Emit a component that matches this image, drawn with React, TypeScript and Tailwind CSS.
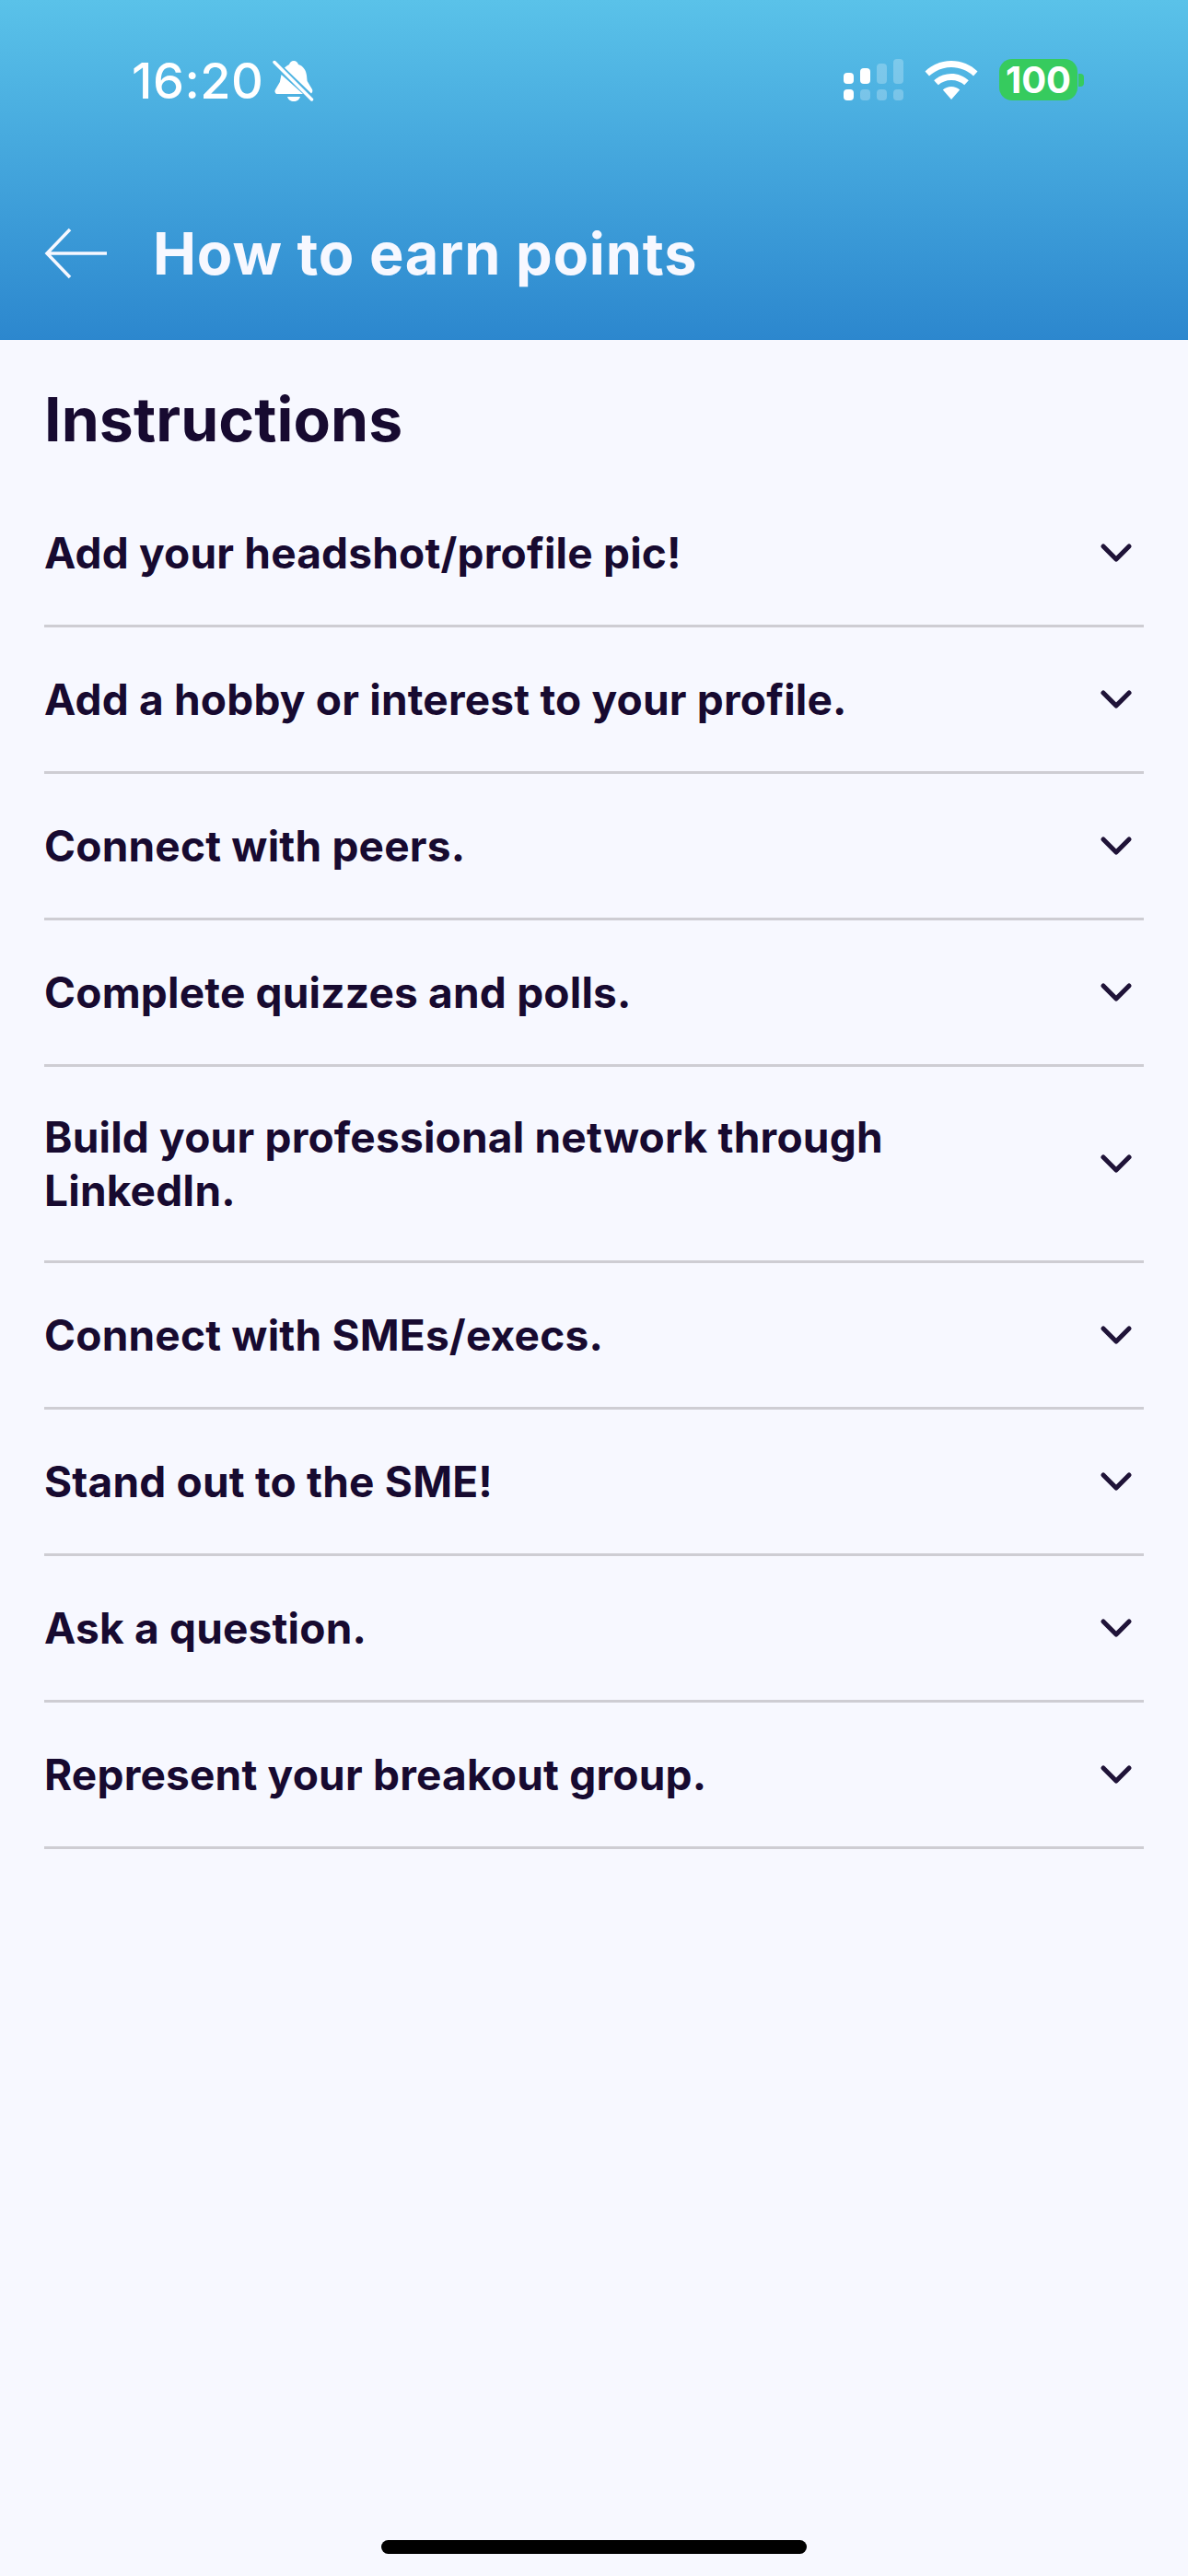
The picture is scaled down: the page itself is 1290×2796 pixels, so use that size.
import { ChevronDown } from "lucide-react";

const items = [
  "Add your headshot/profile pic!",
  "Add a hobby or interest to your profile.",
  "Connect with peers.",
  "Complete quizzes and polls.",
  "Build your professional network through LinkedIn.",
  "Connect with SMEs/execs.",
  "Stand out to the SME!",
  "Ask a question.",
  "Represent your breakout group.",
];

function MutedBell() {
  return (
    <svg width="46" height="48" viewBox="0 0 46 48" fill="none">
      <path
        d="M23 2c2.600 0 4.400 1.700 5 4 5.600 1.800 8.400 6.600 9 12l.6 6 5.400 9c.8 1.600.2 3.400-1 4.400L13 9.500C15 7.500 17 6.500 18 6c.6-2.300 2.400-4 5-4Z"
        fill="white"
      />
      <path d="M9.500 17 33 38H5.500c-2.400 0-3.800-2.600-2.600-4.600l5-8.400L9.500 17Z" fill="white" />
      <path d="M16 41h14c-.8 3-3.600 5-7 5s-6.200-2-7-5Z" fill="white" />
      <path d="M2 3.500 42.500 44" stroke="white" strokeWidth="3.500" strokeLinecap="round" />
    </svg>
  );
}

function Cellular() {
  return (
    <div className="flex items-end gap-[7px]">
      {[
        { h: "h-[12px]", on: true },
        { h: "h-[17px]", on: true },
        { h: "h-[22px]", on: false },
        { h: "h-[27px]", on: false },
      ].map((bar, i) => (
        <div key={i} className="flex w-[11px] flex-col gap-[6px]">
          <div className={`${bar.h} rounded-[4px] ${bar.on ? "bg-white" : "bg-white/25"}`} />
          <div className={`h-[12px] rounded-[4px] ${i === 0 ? "bg-white" : "bg-white/25"}`} />
        </div>
      ))}
    </div>
  );
}

function Wifi() {
  return (
    <svg width="58" height="42" viewBox="0 0 58 42" fill="white">
      <path d="M29 0c11 0 21 4.200 28.500 11.500L53 16.500C46.500 10.500 38 7 29 7S11.500 10.500 5 16.500L.5 11.500C8 4.200 18 0 29 0Z" />
      <path d="M29 14c7.200 0 13.800 2.700 18.800 7.300l-4.600 5C39.500 23 34.500 21 29 21s-10.500 2-14.200 5.300l-4.600-5C15.200 16.700 21.800 14 29 14Z" />
      <path d="M29 28c3.500 0 6.800 1.300 9.200 3.500L29 42l-9.200-10.500C22.200 29.300 25.500 28 29 28Z" />
    </svg>
  );
}

export default function App() {
  return (
    <div className="flex h-[2796px] w-[1290px] flex-col bg-[#f7f8ff] font-['Inter',sans-serif] text-[#170a30]">
      <header className="h-[369px] w-full bg-gradient-to-b from-[#5ac2e9] to-[#2c87ce] px-[48px] text-[#f7f8ff]">
        <div className="flex h-[237px] items-start justify-between pt-[64px]">
          <div className="ml-[95px] flex items-center gap-[10px]">
            <span className="text-[54px] font-medium leading-[48px] tracking-[0.5px] text-white">16:20</span>
            <MutedBell />
          </div>
          <div className="flex items-center gap-[23px] pr-[65px]">
            <Cellular />
            <Wifi />
            <div className="flex items-center gap-[1px]">
              <div className="flex h-[45px] w-[85px] items-center justify-center rounded-[14px] bg-[#36cb5e] text-[40px] font-bold leading-none text-white">
                100
              </div>
              <div className="h-[14px] w-[6px] rounded-r-[4px] bg-[#36cb5e]" />
            </div>
          </div>
        </div>
        <div className="flex items-center">
          <svg width="70" height="56" viewBox="0 0 70 56" fill="none" className="mr-[48px]" stroke="#f7f8ff" strokeWidth="3.500">
            <path d="M68 28H3M28 2 3 28l25 26" />
          </svg>
          <h1 className="text-[63px] font-bold leading-[76px] tracking-[0.8px]">How to earn points</h1>
        </div>
      </header>
      <main className="flex-1 px-[48px] pt-[46px]">
        <h2 className="text-[66px] font-bold leading-[80px] tracking-[0.1px]">Instructions</h2>
        <ul className="mt-[27px]">
          {items.map((item) => (
            <li
              key={item}
              className="flex min-h-[159px] items-center justify-between border-b-[3px] border-[#cecdd3] py-[47px]"
            >
              <span className="max-w-[1000px] text-[46px] font-bold leading-[58px] tracking-[0.2px]">{item}</span>
              <ChevronDown className="mr-[2px] size-[56px] shrink-0 text-[#1f1338]" strokeWidth={2.200} />
            </li>
          ))}
        </ul>
      </main>
      <div className="flex h-[39px] items-start justify-center">
        <div className="h-[15px] w-[462px] rounded-full bg-black" />
      </div>
    </div>
  );
}
